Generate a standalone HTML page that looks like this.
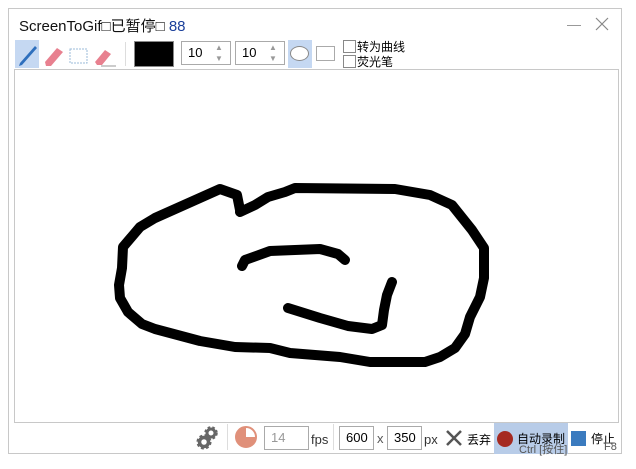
<!DOCTYPE html><html><head><meta charset="utf-8"><style>
body{margin:0;width:636px;height:469px;background:#fff;position:relative;overflow:hidden;font-family:"Liberation Sans","Noto Sans CJK SC",sans-serif}
.a{position:absolute}
.win{left:8px;top:8px;width:614px;height:446px;border:1px solid #c8c8c8;box-sizing:border-box}
.cv{left:14px;top:69px;width:605px;height:354px;border:1px solid #c8c8c8;box-sizing:border-box}
.num{border:1px solid #aaa;background:#fff;height:24px;box-sizing:border-box;font-size:13px;line-height:22px;padding-left:6px}
.sm{font-size:12px}
.cb{width:11px;height:11px;border:1px solid #888;background:#fff}
.sp{position:absolute;left:33px;top:0px;color:#999;font-size:8px;line-height:11px}
</style></head><body>
<div class="a win"></div>
<div class="a" style="left:19px;top:15px;font-size:15px;color:#111">ScreenToGif□已暂停□ <span style="color:#1a3f9a">88</span></div>
<div class="a" style="left:567px;top:25px;width:14px;height:1px;background:#999"></div>
<svg class="a" style="left:595px;top:17px" width="14" height="14"><path d="M1 1L13 13M13 1L1 13" stroke="#888" stroke-width="1.2"/></svg>
<div class="a" style="left:15px;top:40px;width:24px;height:28px;background:#c5d8f2"></div>
<svg class="a" style="left:15px;top:40px" width="110" height="28">
<path d="M5 23 L20 6 L22 8 L7 25 L4 26Z" fill="#2e6fbd"/>
<path d="M30 22 L42 8 L48 12 L36 26 L31 26Z" fill="#e8808f"/>
<rect x="55" y="9" width="17" height="14" fill="none" stroke="#9bbbd8" stroke-dasharray="2 1"/>
<path d="M80 22 L90 10 L96 14 L87 25 L82 25Z" fill="#e8808f"/><line x1="86" y1="26" x2="101" y2="26" stroke="#999"/>
</svg>
<div class="a" style="left:125px;top:42px;width:1px;height:24px;background:#ddd"></div>
<div class="a" style="left:134px;top:41px;width:40px;height:26px;background:#000;border:1px solid #888;box-sizing:border-box"></div>
<div class="a num" style="left:181px;top:41px;width:50px">10<span class="sp">▲<br>▼</span></div>
<div class="a num" style="left:235px;top:41px;width:50px">10<span class="sp">▲<br>▼</span></div>
<div class="a" style="left:288px;top:40px;width:24px;height:28px;background:#c5d8f2"></div>
<div class="a" style="left:290px;top:46px;width:19px;height:15px;border:1px solid #888;border-radius:50%;background:#fff;box-sizing:border-box"></div>
<div class="a" style="left:316px;top:46px;width:19px;height:15px;border:1px solid #aaa;box-sizing:border-box"></div>
<div class="a cb" style="left:343px;top:40px"></div><div class="a sm" style="left:357px;top:38px">转为曲线</div>
<div class="a cb" style="left:343px;top:55px"></div><div class="a sm" style="left:357px;top:53px">荧光笔</div>
<div class="a cv"></div>
<svg class="a" style="left:0;top:0" width="636" height="469">
<g fill="none" stroke="#000" stroke-width="10" stroke-linejoin="round" stroke-linecap="round">
<polyline points="240,210 237,195 220,189 155,218 140,227 123,247 122,268 119,285 120,298 128,312 142,324 155,329 200,341 235,347 270,348 290,353 340,357 370,362 425,362 440,357 455,348 465,334 470,317 480,297 484,278 484,248 472,230 452,205 430,195 395,189 295,188 285,192 268,197 255,205 240,212"/>
<polyline points="242,266 245,260 270,251 320,249 338,254 345,260"/>
<polyline points="288,308 320,318 348,326 372,329 382,325 384,310 387,295 392,282"/>
</g></svg>
<svg class="a" style="left:196px;top:425px" width="24" height="26">
<circle cx="15" cy="8" r="4" fill="none" stroke="#666" stroke-width="3"/>
<circle cx="15" cy="8" r="5.5" fill="none" stroke="#666" stroke-width="2.5" stroke-dasharray="2.5 2"/>
<circle cx="8" cy="17" r="4.5" fill="none" stroke="#666" stroke-width="3.5"/>
<circle cx="8" cy="17" r="6.3" fill="none" stroke="#666" stroke-width="2.5" stroke-dasharray="2.8 2.2"/>
</svg>
<div class="a" style="left:227px;top:424px;width:1px;height:26px;background:#ddd"></div>
<div class="a" style="left:235px;top:426px;width:22px;height:22px;border-radius:50%;border:2px solid #e0907a;box-sizing:border-box;background:conic-gradient(#fff 0 25%,#e0907a 25% 100%)"></div>
<div class="a num" style="left:264px;top:426px;width:45px;color:#999">14</div>
<div class="a" style="left:311px;top:432px;font-size:13px;color:#333">fps</div>
<div class="a" style="left:333px;top:424px;width:1px;height:26px;background:#ddd"></div>
<div class="a num" style="left:339px;top:426px;width:35px">600</div>
<div class="a" style="left:377px;top:431px;font-size:13px;color:#555">x</div>
<div class="a num" style="left:387px;top:426px;width:35px">350</div>
<div class="a" style="left:424px;top:432px;font-size:13px;color:#333">px</div>
<svg class="a" style="left:446px;top:430px" width="16" height="16"><path d="M1 1L15 15M15 1L1 15" stroke="#555" stroke-width="2.5"/></svg>
<div class="a sm" style="left:467px;top:431px">丢弃</div>
<div class="a" style="left:494px;top:423px;width:74px;height:31px;background:#b8cce8"></div>
<div class="a" style="left:497px;top:431px;width:16px;height:16px;border-radius:50%;background:#a52a22"></div>
<div class="a sm" style="left:517px;top:430px">自动录制</div>
<div class="a" style="left:519px;top:441px;font-size:11px;color:#555">Ctrl [按住]</div>
<div class="a" style="left:571px;top:431px;width:15px;height:15px;background:#3b7bbf"></div>
<div class="a sm" style="left:591px;top:430px">停止</div>
<div class="a" style="left:604px;top:441px;font-size:11px;color:#555">F8</div>
</body></html>
